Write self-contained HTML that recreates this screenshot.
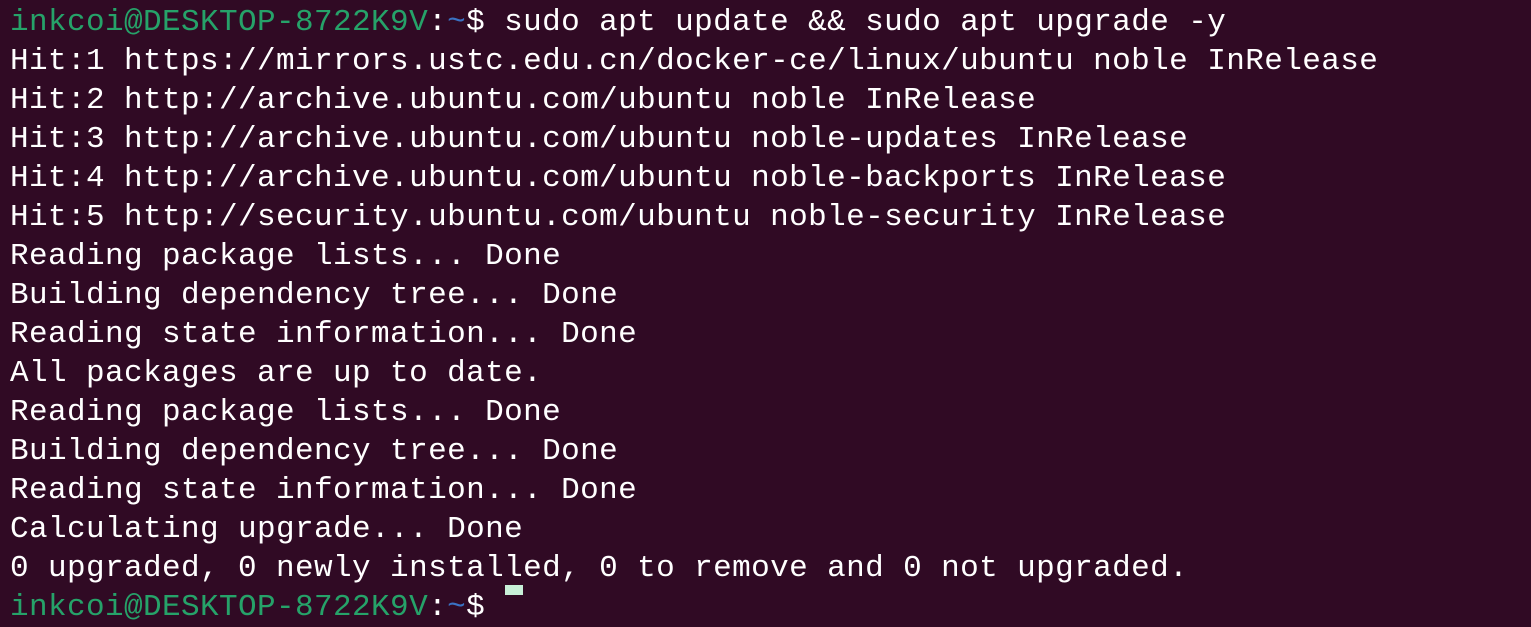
<!DOCTYPE html>
<html><head><meta charset="utf-8"><style>
html,body{margin:0;padding:0;background:#300a24;width:1531px;height:591px;overflow:hidden}
pre{margin:0;position:absolute;left:10px;top:3px;font-family:"Liberation Mono","DejaVu Sans Mono",monospace;font-size:31px;letter-spacing:0.4px;line-height:39px;color:#ffffff;white-space:pre}
.g{color:#26a269}.b{color:#3a72c4}
.cur{position:absolute;left:505px;top:585px;width:18px;height:10px;background:#c8f0d8}
</style></head><body>
<pre><span class="g">inkcoi@DESKTOP-8722K9V</span>:<span class="b">~</span>$ sudo apt update &amp;&amp; sudo apt upgrade -y
Hit:1 https://mirrors.ustc.edu.cn/docker-ce/linux/ubuntu noble InRelease
Hit:2 http://archive.ubuntu.com/ubuntu noble InRelease
Hit:3 http://archive.ubuntu.com/ubuntu noble-updates InRelease
Hit:4 http://archive.ubuntu.com/ubuntu noble-backports InRelease
Hit:5 http://security.ubuntu.com/ubuntu noble-security InRelease
Reading package lists... Done
Building dependency tree... Done
Reading state information... Done
All packages are up to date.
Reading package lists... Done
Building dependency tree... Done
Reading state information... Done
Calculating upgrade... Done
0 upgraded, 0 newly installed, 0 to remove and 0 not upgraded.
<span class="g">inkcoi@DESKTOP-8722K9V</span>:<span class="b">~</span>$ </pre>
<div class="cur"></div>
</body></html>
